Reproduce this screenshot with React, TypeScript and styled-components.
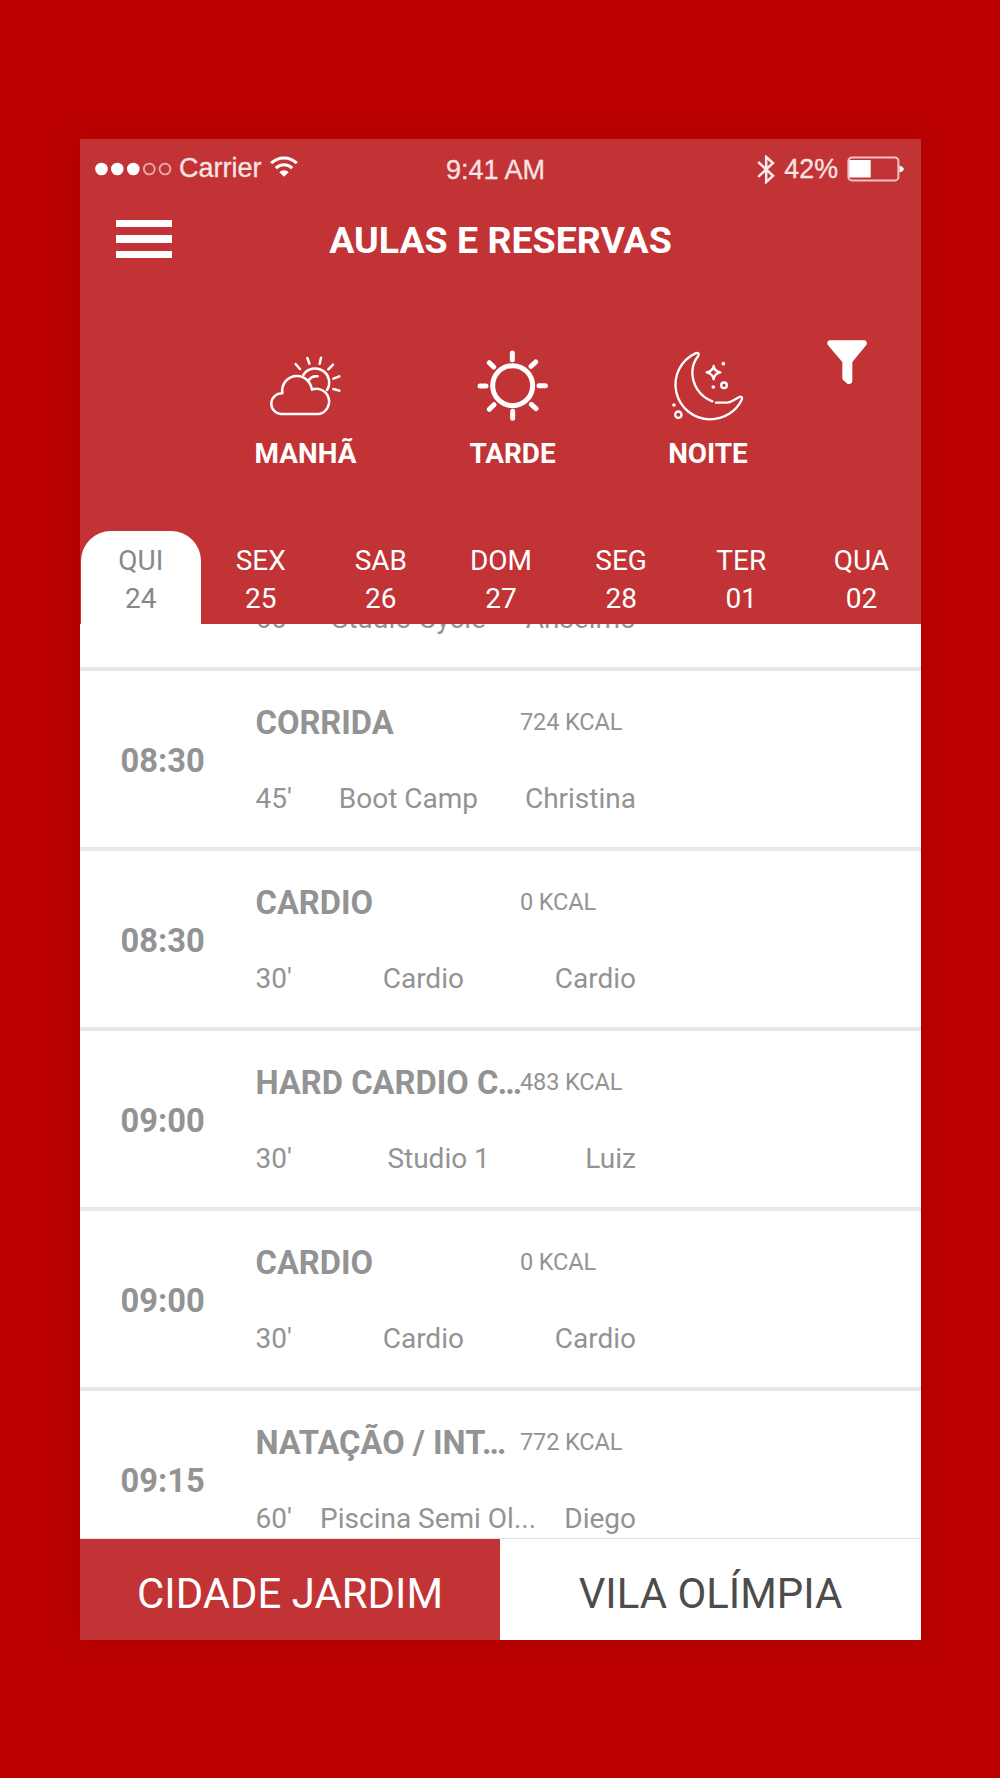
import React from "react";
import styled, { createGlobalStyle } from "styled-components";

const brand = "#c23336";

const GlobalStyle = createGlobalStyle`
  *, *::before, *::after { box-sizing: border-box; }
  body {
    margin: 0;
    background: #bc0000;
    font-family: Roboto, "Liberation Sans", sans-serif;
  }
`;

const Page = styled.main`
  min-height: 1778px;
  padding: 139px 79px 138px 80px;
  background: #bc0000;
`;

const Phone = styled.div`
  display: flex;
  flex-direction: column;
  width: 841px;
  height: 1501px;
  background: #fff;
  box-shadow: 0 0 30px rgba(120, 0, 0, 0.25);
  overflow: hidden;
`;

const Header = styled.header`
  display: flex;
  flex-direction: column;
  height: 485px;
  flex: none;
  background: ${brand};
  color: #fff;
`;

const StatusBar = styled.div`
  display: grid;
  grid-template-columns: 1fr auto 1fr;
  align-items: center;
  height: 60px;
  padding: 0 17px 0 15px;
  font-family: "Liberation Sans", sans-serif;
  color: #f9e3e4;
`;

const StatusGroup = styled.div<{ $end?: boolean }>`
  display: flex;
  align-items: center;
  justify-content: ${(p) => (p.$end ? "flex-end" : "flex-start")};
  gap: ${(p) => (p.$end ? 9 : 7)}px;

  svg {
    flex: none;
  }
`;

const StatusText = styled.span`
  font-size: 27px;
  line-height: 30px;
  white-space: nowrap;
  -webkit-text-stroke: 0.3px currentColor;
`;

const Carrier = styled(StatusText)`
  margin-top: -2px;
  margin-right: 1px;
`;

const Clock = styled(StatusText)`
  margin: 2px 8px 0 0;
`;

const Charge = styled(StatusText)`
  margin-top: -1px;
  font-size: 26.8px;
`;

const TitleBar = styled.div`
  display: grid;
  grid-template-columns: 57px 1fr 57px;
  align-items: center;
  height: 80px;
  padding: 0 35px;
`;

const Burger = styled.button`
  display: flex;
  flex-direction: column;
  gap: 8px;
  width: 57px;
  padding: 0 0 0 0.5px;
  border: 0;
  background: none;
`;

const BurgerLine = styled.span`
  height: 7.5px;
  background: #fff;
`;

const Title = styled.h1`
  margin: 2px 0 0;
  text-align: center;
  font-size: 37.5px;
  line-height: 44px;
  font-weight: 700;
  white-space: nowrap;
`;

const Periods = styled.div`
  display: grid;
  grid-template-columns: 207px 207px 184px 94px;
  height: 252px;
  padding: 61px 0 0 122px;
`;

const Period = styled.button`
  display: flex;
  flex-direction: column;
  align-items: center;
  padding: 0;
  border: 0;
  background: none;
  color: #fff;
  font: 700 27.9px/34px Roboto, sans-serif;
`;

const PeriodIcon = styled.span`
  display: flex;
  align-items: center;
  justify-content: center;
  height: 97px;
  padding-bottom: 6px;
`;

const FilterButton = styled.button`
  display: flex;
  align-items: flex-start;
  justify-content: center;
  padding: 0;
  border: 0;
  background: none;
`;

const Days = styled.nav`
  display: grid;
  grid-template-columns: repeat(7, 1fr);
  height: 93px;
`;

const Day = styled.button<{ $active?: boolean }>`
  display: flex;
  flex-direction: column;
  align-items: center;
  margin: ${(p) => (p.$active ? "0 -0.5px 0 1px" : "0")};
  padding: 11px 0 0 ${(p) => (p.$active ? "0" : "1px")};
  border: 0;
  border-radius: 30px 30px 0 0;
  background: ${(p) => (p.$active ? "#fff" : "transparent")};
  color: ${(p) => (p.$active ? "#888" : "#fff")};
  font: 400 28px/38px Roboto, sans-serif;
`;

const List = styled.section`
  flex: 1;
  min-height: 0;
  overflow: hidden;
  border-bottom: 1px solid #e2e2e2;
`;

const Scroller = styled.div`
  margin-top: -133px;
`;

const Row = styled.article`
  display: grid;
  grid-template-columns: 84px 380.5px;
  column-gap: 51px;
  align-items: center;
  height: 180px;
  padding: 3px 0 0 40.5px;
  border-bottom: 4px solid #e8e8e8;
  color: #939393;
`;

const Time = styled.time`
  font-size: 32.7px;
  line-height: 38px;
  font-weight: 700;
  white-space: nowrap;
`;

const Info = styled.div`
  display: flex;
  flex-direction: column;
  gap: 39px;
`;

const Top = styled.div`
  display: grid;
  grid-template-columns: 264.5px 1fr;
  height: 38px;
  line-height: 38px;
  white-space: nowrap;
`;

const Name = styled.h2`
  margin: 0;
  padding-top: 1px;
  font-size: 32.7px;
  line-height: 38px;
  font-weight: 700;
`;

const Dots = styled.span<{ $kern: number }>`
  margin-left: ${(p) => p.$kern}px;
  letter-spacing: -2px;
`;

const Kcal = styled.span`
  font-size: 23.6px;
  letter-spacing: -0.15px;
`;

const Details = styled.div`
  display: flex;
  justify-content: space-between;
  font-size: 28px;
  line-height: 38px;
  white-space: nowrap;
`;

const Units = styled.footer`
  display: grid;
  grid-template-columns: 420px 421px;
  height: 101px;
  flex: none;
`;

const Unit = styled.button<{ $active?: boolean }>`
  padding: 8px 0 0;
  border: 0;
  background: ${(p) => (p.$active ? brand : "#fff")};
  color: ${(p) => (p.$active ? "#fff" : "#4c4c4c")};
  font: 400 41.9px/50px Roboto, sans-serif;
`;

const SignalDots = () => (
  <svg width="77" height="14" viewBox="0 0 77 14">
    {[6.5, 22.3, 38.3].map((x) => (
      <circle key={x} cx={x} cy="7" r="6.3" fill="#fff" />
    ))}
    {[54.3, 70].map((x) => (
      <circle key={x} cx={x} cy="7" r="5.4" fill="none" stroke="#e9aeb0" strokeWidth="1.8" />
    ))}
  </svg>
);

const WifiMark = styled.svg`
  margin-bottom: 5px;
`;

const Wifi = () => (
  <WifiMark width="28" height="21" viewBox="0 0 28 21" fill="none" stroke="#fff" strokeWidth="3">
    <path d="M1.2 7.2a18.4 18.4 0 0 1 25.6 0" />
    <path d="M5.8 12.1a11.6 11.6 0 0 1 16.4 0" />
    <path d="M14 20.8 9.3 16.2a6.6 6.6 0 0 1 9.4 0Z" fill="#fff" stroke="none" />
  </WifiMark>
);

const Bluetooth = () => (
  <svg width="18" height="29" viewBox="0 0 18 29" fill="none" stroke="#fbeaea" strokeWidth="2.5">
    <path d="M1.2 7 16 20.8 9.2 27V2L16 8 1.2 21.8" />
  </svg>
);

const BatteryMark = styled.svg`
  margin-bottom: 1px;
`;

const Battery = () => (
  <BatteryMark width="57" height="26" viewBox="0 0 57 26">
    <rect x="1.4" y="1.4" width="50" height="23" rx="3.5" fill="none" stroke="#f0c4c5" strokeWidth="2" />
    <rect x="2.2" y="4" width="21.5" height="17.5" fill="#fff" />
    <path d="M52.5 9.5Q56.8 11 56.8 13T52.5 16.5Z" fill="#fff" />
  </BatteryMark>
);

const CloudSun = () => (
  <svg width="73" height="62" viewBox="88 76 219 186" fill="none" stroke="#fff" strokeWidth="7.5" strokeLinecap="round" strokeLinejoin="round">
    <path d="M124 253H237A38 38 0 1 0 217 180C213 155 194 139 172 139C144 139 124 163 128 191A31 31 0 0 0 124 253Z" />
    <path d="M191 136A39 39 0 0 1 262 181" />
    <path d="M208 150Q218 137 234 140" />
    <path d="M168 103 181 118M203 85 209 102M244 84 240 102M280 105 266 119M299 140 281 147M299 183 281 178" />
  </svg>
);

const Sun = () => (
  <svg width="73" height="73" viewBox="708 58 219 219" fill="none" stroke="#fff" strokeWidth="15" strokeLinecap="round">
    <circle cx="818" cy="168" r="60" />
    <path d="M817 70V90M818 245V266M720 169H738M897 168H916M748 99 761 112M887 97 873 110M748 239 762 225M888 237 874 224" />
  </svg>
);

const Moon = () => (
  <svg width="73" height="73" viewBox="96 88 219 219" fill="none" stroke="#fff" strokeWidth="7" strokeLinecap="round" strokeLinejoin="round">
    <path d="M217 245C178 230 156 194 157 155C158 133 164 122 175 108Q179 97 166 101A104 104 0 0 0 209 299C252 299 290 275 306 238Q307 229 298 232L278 243Q270 249 260 249H228" />
    <path d="M221 139Q223 155 241 158Q223 162 221 179Q218 162 200 158Q218 155 221 139Z" />
    <circle cx="252" cy="197" r="8.5" />
    <circle cx="115" cy="285" r="9.5" />
    <g fill="#fff" stroke="none">
      <circle cx="250" cy="132" r="5.5" />
      <circle cx="220" cy="202" r="5.5" />
      <circle cx="102" cy="256" r="5.5" />
    </g>
  </svg>
);

const Funnel = () => (
  <svg width="40" height="45" viewBox="562 58 120 135" fill="#fff">
    <path d="M569 59H675Q685 62 680 73L638 124V182Q636 192 624 190L611 179Q608 176 608 172V124L565 74Q559 63 569 59Z" />
  </svg>
);

const periods = [
  { label: "MANHÃ", icon: <CloudSun /> },
  { label: "TARDE", icon: <Sun /> },
  { label: "NOITE", icon: <Moon /> },
];

const days = [
  ["QUI", "24"],
  ["SEX", "25"],
  ["SAB", "26"],
  ["DOM", "27"],
  ["SEG", "28"],
  ["TER", "01"],
  ["QUA", "02"],
];

interface ClassItem {
  time?: string;
  name?: string;
  /** Kerning before the ellipsis of a shortened name. */
  cut?: number;
  kcal?: string;
  details: string[];
}

const classes: ClassItem[] = [
  { details: ["60'", "Studio Cycle", "Anselmo"] },
  { time: "08:30", name: "CORRIDA", kcal: "724 KCAL", details: ["45'", "Boot Camp", "Christina"] },
  { time: "08:30", name: "CARDIO", kcal: "0 KCAL", details: ["30'", "Cardio", "Cardio"] },
  { time: "09:00", name: "HARD CARDIO C", cut: -0.5, kcal: "483 KCAL", details: ["30'", "Studio 1", "Luiz"] },
  { time: "09:00", name: "CARDIO", kcal: "0 KCAL", details: ["30'", "Cardio", "Cardio"] },
  { time: "09:15", name: "NATAÇÃO / INT", cut: -3.5, kcal: "772 KCAL", details: ["60'", "Piscina Semi Ol...", "Diego"] },
];

export default function App() {
  return (
    <>
      <GlobalStyle />
      <Page>
        <Phone>
          <Header>
            <StatusBar>
              <StatusGroup>
                <SignalDots />
                <Carrier>Carrier</Carrier>
                <Wifi />
              </StatusGroup>
              <Clock>9:41 AM</Clock>
              <StatusGroup $end>
                <Bluetooth />
                <Charge>42%</Charge>
                <Battery />
              </StatusGroup>
            </StatusBar>
            <TitleBar>
              <Burger aria-label="Menu">
                <BurgerLine />
                <BurgerLine />
                <BurgerLine />
              </Burger>
              <Title>AULAS E RESERVAS</Title>
            </TitleBar>
            <Periods>
              {periods.map((p) => (
                <Period key={p.label}>
                  <PeriodIcon>{p.icon}</PeriodIcon>
                  {p.label}
                </Period>
              ))}
              <FilterButton aria-label="Filtro">
                <Funnel />
              </FilterButton>
            </Periods>
            <Days>
              {days.map(([name, date], i) => (
                <Day key={date} $active={i === 0}>
                  <span>{name}</span>
                  <span>{date}</span>
                </Day>
              ))}
            </Days>
          </Header>
          <List>
            <Scroller>
              {classes.map((c, i) => (
                <Row key={i}>
                  <Time>{c.time}</Time>
                  <Info>
                    <Top>
                      <Name>
                        {c.name}
                        {c.cut !== undefined && <Dots $kern={c.cut}>...</Dots>}
                      </Name>
                      <Kcal>{c.kcal}</Kcal>
                    </Top>
                    <Details>
                      {c.details.map((d, j) => (
                        <span key={j}>{d}</span>
                      ))}
                    </Details>
                  </Info>
                </Row>
              ))}
            </Scroller>
          </List>
          <Units>
            <Unit $active>CIDADE JARDIM</Unit>
            <Unit>VILA OLÍMPIA</Unit>
          </Units>
        </Phone>
      </Page>
    </>
  );
}
